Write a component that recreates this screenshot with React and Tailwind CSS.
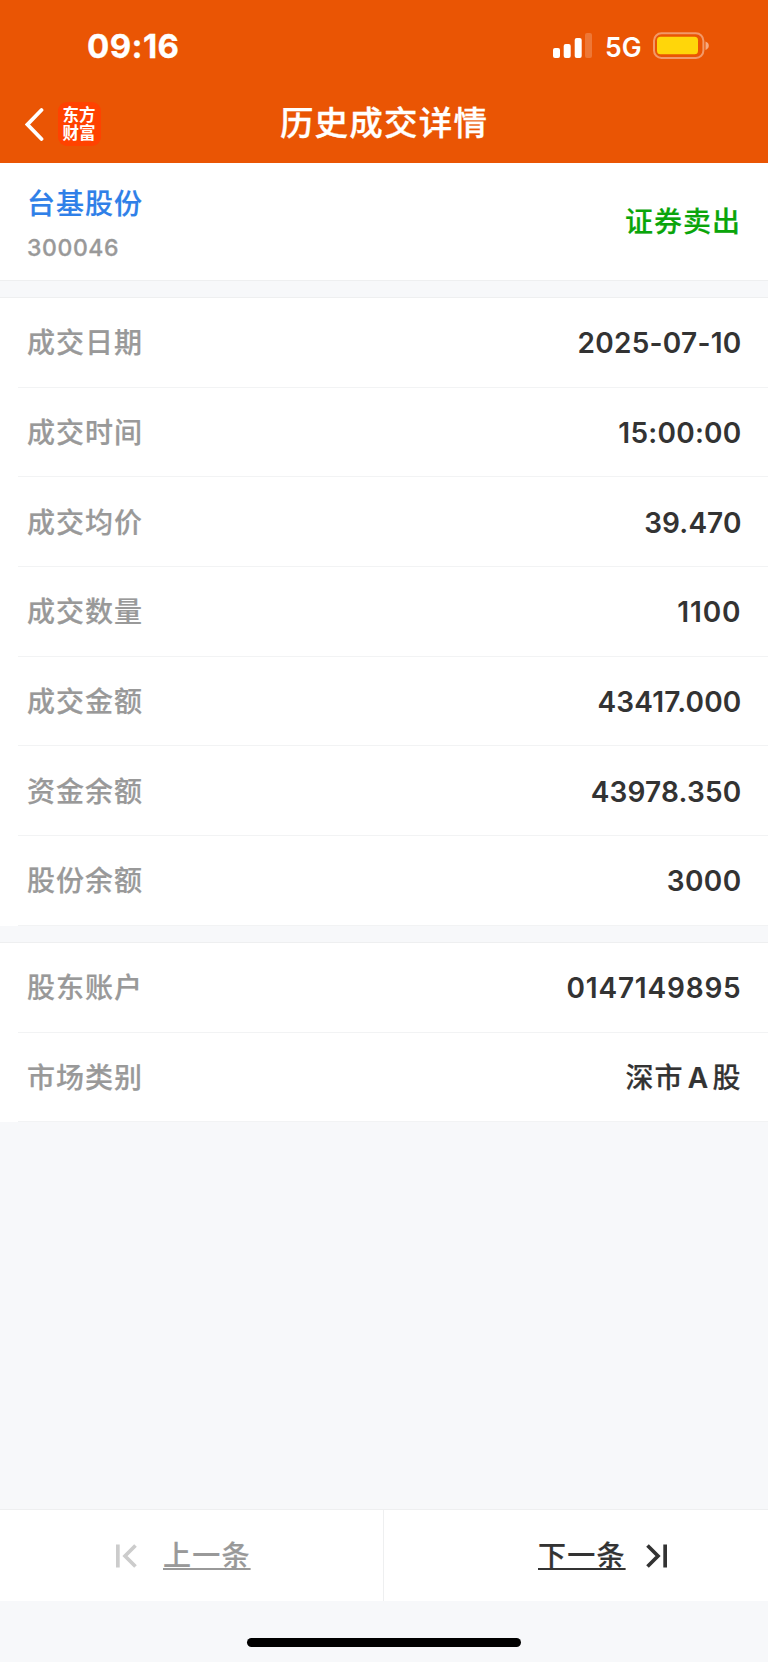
const tradeRows = [
  { label: '成交日期', value: '2025-07-10', spacing: 'tracking-[0.25px]' },
  { label: '成交时间', value: '15:00:00', spacing: 'tracking-[0.25px]' },
  { label: '成交均价', value: '39.470', spacing: 'tracking-[0.1px]' },
  { label: '成交数量', value: '1100', spacing: 'tracking-[0.9px]' },
  { label: '成交金额', value: '43417.000', spacing: 'tracking-[0.2px]' },
  { label: '资金余额', value: '43978.350', spacing: 'tracking-[0.2px]' },
  { label: '股份余额', value: '3000', spacing: 'tracking-[0.4px]' },
];

const accountRows = [
  { label: '股东账户', value: '0147149895', spacing: 'tracking-[0.8px]' },
  {
    label: '市场类别',
    spacing: 'tracking-[1px]',
    value: (
      <span className="font-medium [-webkit-text-stroke:0.2px]">
        深市<span className="inline-block w-[29px] text-center tracking-normal font-semibold">A</span>股
      </span>
    ),
  },
];

function StatusBar() {
  return (
    <div className="h-[92px] flex items-center justify-between pl-[87px] pr-[58px]">
      <span className="text-[33px] leading-none font-bold tracking-[0.4px] [-webkit-text-stroke:0.3px]">09:16</span>
      <div className="flex items-center">
        <svg width="40" height="26" viewBox="0 0 40 26" fill="currentColor">
          <rect x="0" y="15" width="7" height="10" rx="2" />
          <rect x="10.7" y="11" width="7" height="14" rx="2" />
          <rect x="21.7" y="5" width="7" height="20" rx="2" />
          <rect x="32" y="0" width="7" height="25" rx="2" opacity="0.2" />
        </svg>
        <span className="ml-3 mt-0.5 text-[26.5px] leading-none font-semibold">5G</span>
        <svg className="ml-[11.5px]" width="57" height="28" viewBox="0 0 57 28">
          <rect x="1" y="1.3" width="49.4" height="24.7" rx="7.5" fill="none" stroke="#fff" strokeOpacity="0.4" strokeWidth="2" />
          <rect x="4" y="4.7" width="41" height="17.6" rx="3.5" fill="#ffd60a" />
          <path d="M52.5 9.5c2 .7 3.3 2.2 3.3 4.2s-1.3 3.5-3.3 4.200z" fill="#fff" fillOpacity="0.5" />
        </svg>
      </div>
    </div>
  );
}

function TitleBar() {
  return (
    <div className="relative h-[71px] flex items-center justify-center pb-[7px]">
      <div className="absolute left-[25px] top-[10px] flex items-center">
        <svg width="19" height="34" viewBox="0 0 19 34" fill="none" stroke="currentColor" strokeWidth="3.8" strokeLinecap="round">
          <path d="M16.5 3 2.5 17.5 16.5 32" />
        </svg>
        <div className="ml-[13.5px] w-[43px] h-[44px] rounded-[9px] bg-[#ff4200] grid place-content-center text-[16.5px] leading-[18.5px] font-bold text-center">
          <span>东方</span>
          <span>财富</span>
        </div>
      </div>
      <h1 className="text-[33.5px] leading-none font-medium tracking-[1.2px] [-webkit-text-stroke:0.3px]">历史成交详情</h1>
    </div>
  );
}

function Rows({ items }) {
  return (
    <div className="bg-white">
      {items.map((item) => (
        <div key={item.label} className="ml-[18px] pl-[9px] pr-[26.5px] pt-[2px] h-[89.7px] border-b border-[#f2f3f4] flex items-center justify-between text-[28px]">
          <span className="text-[#999] font-medium tracking-[1px] [-webkit-text-stroke:0.2px]">{item.label}</span>
          <span className={`text-[#333] font-semibold ${item.spacing}`}>{item.value}</span>
        </div>
      ))}
    </div>
  );
}

export default function App() {
  return (
    <div className="w-[768px] h-[1662px] flex flex-col bg-[#f7f8fa] overflow-hidden font-['Inter','Noto_Sans_CJK_SC',sans-serif]">
      <header className="h-[163px] shrink-0 bg-[#ea5504] text-white">
        <StatusBar />
        <TitleBar />
      </header>

      <section className="h-[118px] bg-white border-b border-[#eeeff0] flex items-center justify-between pl-[27px] pr-[27px] font-medium">
        <div className="pt-[4px]">
          <div className="text-[28px] leading-9 text-[#2f80e8] tracking-[1px] [-webkit-text-stroke:0.2px]">台基股份</div>
          <div className="mt-[12px] text-[23px] leading-7 text-[#999] tracking-[0.6px] [-webkit-text-stroke:0.3px]">300046</div>
        </div>
        <div className="text-[28px] text-[#0aa50a] tracking-[1px] [-webkit-text-stroke:0.2px]">证券卖出</div>
      </section>

      <section className="mt-4 border-t border-[#eeeff0]">
        <Rows items={tradeRows} />
      </section>

      <section className="mt-4 border-t border-[#eeeff0]">
        <Rows items={accountRows} />
      </section>

      <footer className="mt-auto">
        <div className="h-[92px] bg-white border-t border-[#eeeff0] flex text-[28px] font-medium tracking-[1.2px]">
          <div className="w-[384px] border-r border-[#eeeff0] flex items-center pl-[116px] text-[#999]">
            <svg width="21" height="24" viewBox="0 0 21 24" fill="none" stroke="#ccc" strokeWidth="3.7">
              <path d="M1.85 .5v23M19.5 1.5 9 12 19.5 22.5" />
            </svg>
            <span className="ml-[26px] mt-[1px] underline underline-offset-[2px] decoration-2 [text-decoration-skip-ink:none] [-webkit-text-stroke:0.2px]">上一条</span>
          </div>
          <div className="flex-1 flex items-center pl-[154px] text-[#333]">
            <span className="mt-[1px] underline underline-offset-[2px] decoration-2 [text-decoration-skip-ink:none] [-webkit-text-stroke:0.2px]">下一条</span>
            <svg className="ml-[20px]" width="21" height="24" viewBox="0 0 21 24" fill="none" stroke="currentColor" strokeWidth="3.7">
              <path d="M19.15 .5v23M1.5 1.5 12 12 1.5 22.5" />
            </svg>
          </div>
        </div>
        <div className="h-[61px] flex items-end justify-center pb-[15px]">
          <div className="w-[274px] h-[9px] rounded-full bg-black" />
        </div>
      </footer>
    </div>
  );
}
